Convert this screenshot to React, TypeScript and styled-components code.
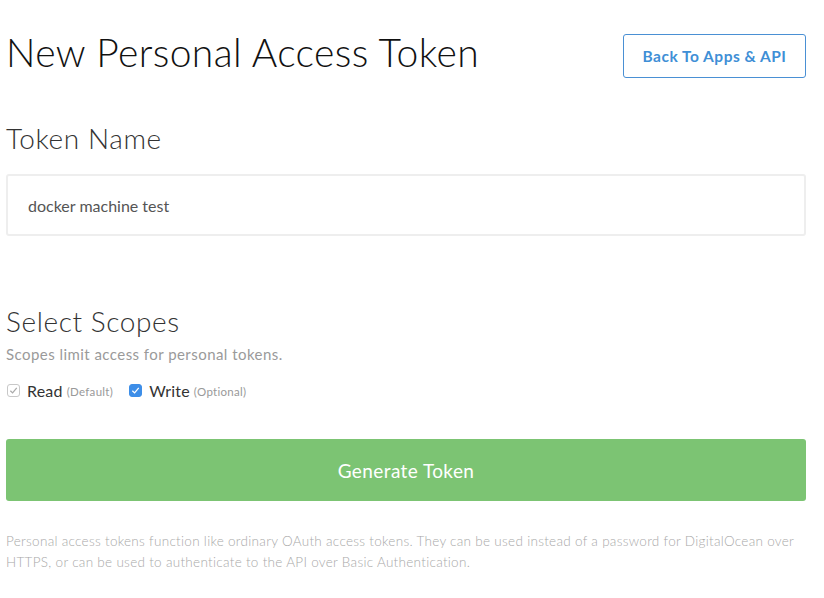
import React from "react";
import styled, { createGlobalStyle } from "styled-components";

const Global = createGlobalStyle`
  html, body { margin: 0; padding: 0; background: #fff; }
  body { font-family: Lato, "Open Sans", sans-serif; -webkit-font-smoothing: antialiased; }
`;

const Page = styled.div`
  width: 800px;
  padding: 0 6px;
  display: flex;
  flex-direction: column;
`;

const Header = styled.div`
  display: flex;
  justify-content: space-between;
  align-items: flex-start;
  padding-top: 28px;
`;

const Title = styled.h1`
  margin: 0;
  font-size: 39px;
  font-weight: 300;
  color: #111;
  line-height: 48px;
  letter-spacing: 0.4px;
`;

const OutlineButton = styled.button`
  margin-top: 6px;
  width: 183px;
  height: 44px;
  border: 1px solid #4a90d4;
  border-radius: 3px;
  background: #fff;
  color: #3f8fd6;
  font-family: Lato, sans-serif;
  font-weight: 700;
  font-size: 15.5px;
  letter-spacing: 0.5px;
  cursor: pointer;
`;

const SectionTitle = styled.h2<{ $top: number }>`
  margin: ${(p) => p.$top}px 0 0;
  font-size: 28px;
  font-weight: 300;
  color: #333;
  line-height: 34px;
  letter-spacing: 0.6px;
`;

const Input = styled.div`
  margin-top: 19px;
  height: 62px;
  box-sizing: border-box;
  border: 2px solid #eeeeee;
  border-radius: 3px;
  display: flex;
  align-items: center;
  padding-left: 20px;
  font-size: 16px;
  color: #555;
`;

const Hint = styled.p`
  margin: 6px 0 0;
  font-size: 15px;
  color: #9a9a9a;
  line-height: 20px;
  letter-spacing: 0.45px;
`;

const Scopes = styled.div`
  display: flex;
  align-items: center;
  gap: 15px;
  margin-top: 17px;
`;

const Scope = styled.label`
  display: flex;
  align-items: center;
  gap: 7px;
  font-size: 16px;
  color: #333;
  letter-spacing: 0.2px;
`;

const Box = styled.span<{ $checked: boolean }>`
  width: 13px;
  height: 13px;
  border-radius: 3px;
  box-sizing: border-box;
  margin-left: 1px;
  display: flex;
  align-items: center;
  justify-content: center;
  background: ${(p) => (p.$checked ? "#3d8ee8" : "#fff")};
  border: 1px solid ${(p) => (p.$checked ? "#3d8ee8" : "#c8c8c8")};
`;

const Note = styled.span`
  font-size: 11.5px;
  color: #999;
  margin-left: -3px;
  margin-top: 2px;
  letter-spacing: 0.3px;
`;

const GreenButton = styled.button`
  margin-top: 39px;
  height: 62px;
  width: 100%;
  border: none;
  border-radius: 3px;
  background: #7cc473;
  color: #fff;
  font-family: Lato, sans-serif;
  font-size: 19px;
  font-weight: 400;
  letter-spacing: 0.4px;
`;

const Footer = styled.p`
  margin: 30px 0 0;
  font-size: 13.5px;
  color: #a9a9a9;
  line-height: 21px;
  font-weight: 300;
  letter-spacing: 0.3px;
`;

const Check = ({ color }: { color: string }) => (
  <svg width="9" height="9" viewBox="0 0 10 10">
    <path d="M1.5 5.2 L4 7.6 L8.6 2" fill="none" stroke={color} strokeWidth="1.4" />
  </svg>
);

export default function App() {
  return (
    <>
      <Global />
      <Page>
        <Header>
          <Title>New Personal Access Token</Title>
          <OutlineButton>Back To Apps &amp; API</OutlineButton>
        </Header>
        <SectionTitle $top={43}>Token Name</SectionTitle>
        <Input>docker machine test</Input>
        <SectionTitle $top={68}>Select Scopes</SectionTitle>
        <Hint>Scopes limit access for personal tokens.</Hint>
        <Scopes>
          <Scope>
            <Box $checked={false}>
              <Check color="#aaa" />
            </Box>
            Read <Note>(Default)</Note>
          </Scope>
          <Scope>
            <Box $checked={true}>
              <Check color="#fff" />
            </Box>
            Write <Note>(Optional)</Note>
          </Scope>
        </Scopes>
        <GreenButton>Generate Token</GreenButton>
        <Footer>
          Personal access tokens function like ordinary OAuth access tokens. They can be used instead of a password for
          DigitalOcean over HTTPS, or can be used to authenticate to the API over Basic Authentication.
        </Footer>
      </Page>
    </>
  );
}
